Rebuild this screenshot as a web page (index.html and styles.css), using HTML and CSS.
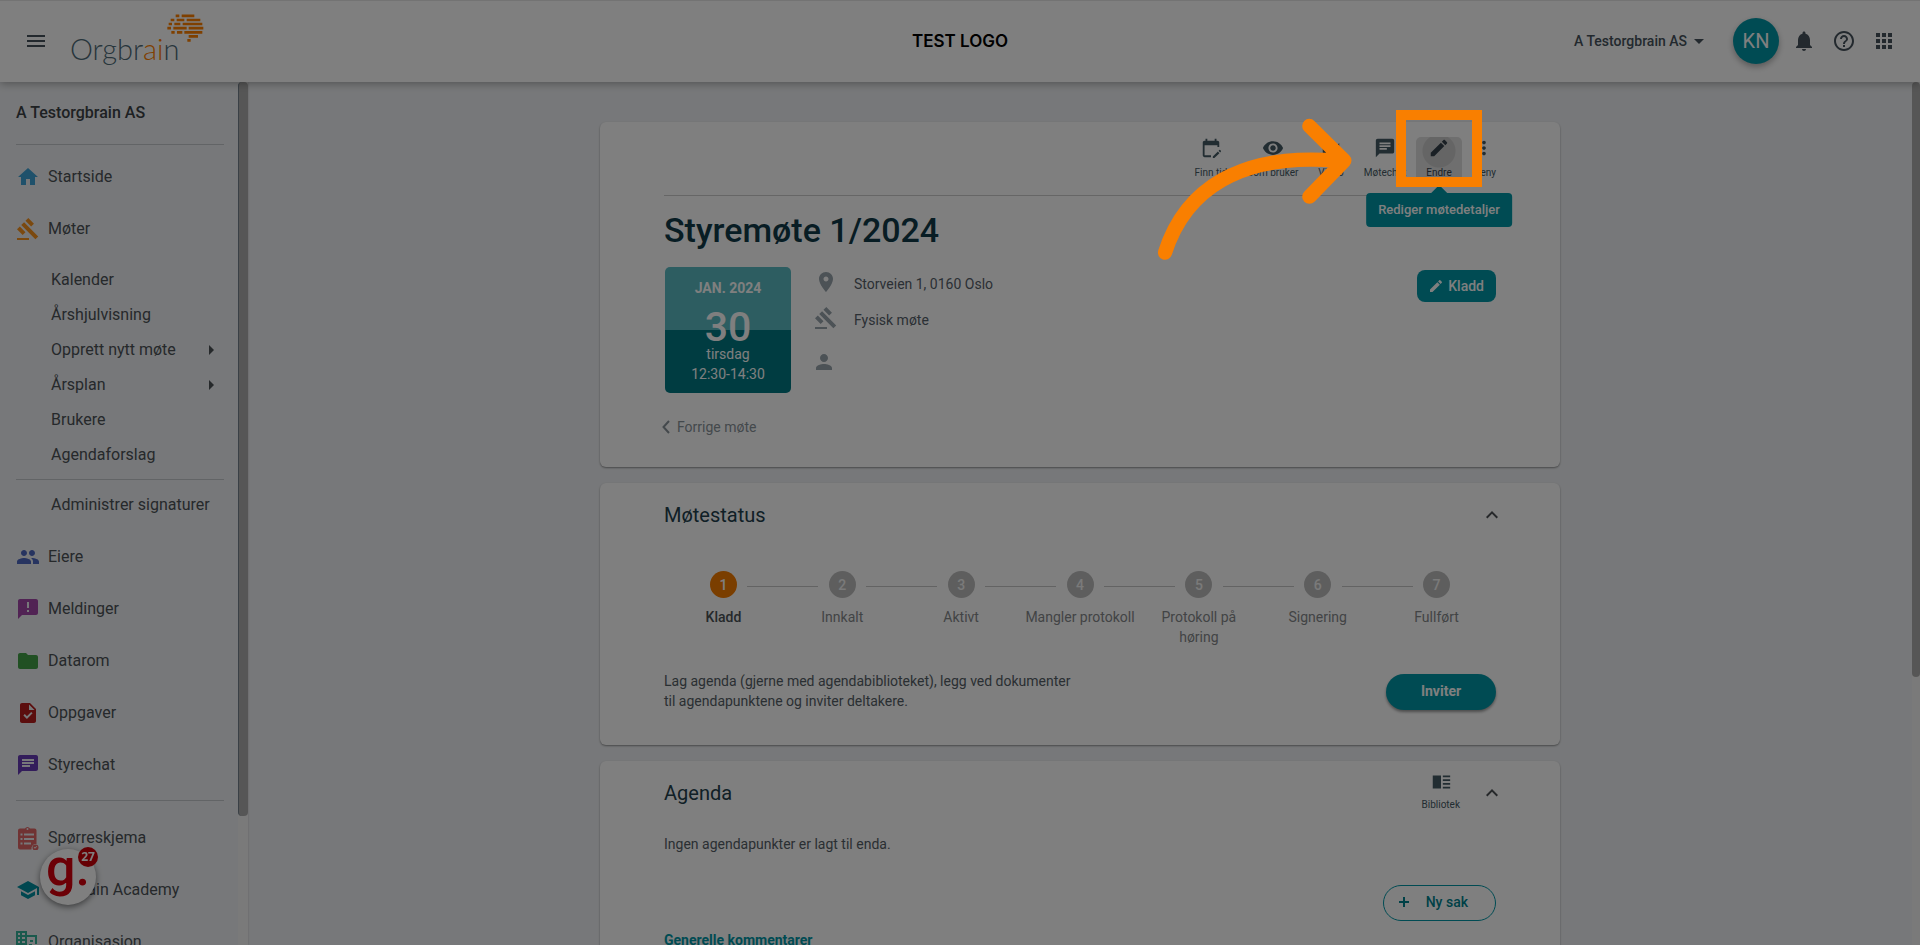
FILE: index.html
```html
<!DOCTYPE html>
<html lang="nb">
<head>
<meta charset="utf-8">
<title>Styremøte 1/2024</title>
<link rel="stylesheet" href="styles.css">
</head>
<body>
<div class="app">
  <header class="topbar">
    <button class="icon-btn" type="button" aria-label="Meny"><svg class="icon" viewBox="0 0 24 24"><path d="M3 18h18v-2H3v2zm0-5h18v-2H3v2zm0-7v2h18V6H3z"/></svg></button>
    <a class="brand" href="#">
      <span class="brand-name">Orgbr<span class="brand-accent">ai</span>n</span>
      <svg class="brand-mark" viewBox="500 43 111 84" aria-hidden="true"><g stroke="#ff8000" stroke-width="8"><path d="M526 48.500h11M544 48.500h38M511 61h11M529 61h23M559 61h41M505 73h10M522 73h18M547 73h59M501 85.500h11M519 85.500h40M565 85.500h44M513 98h10M530 98h16M552 98h54M565 110h28M561 122h10"/></g></svg>
    </a>
    <div class="client-logo">TEST LOGO</div>
    <div class="topbar-actions">
      <button class="org-switch" type="button">A Testorgbrain AS<svg class="icon" viewBox="0 0 24 24"><path d="M7 10l5 5 5-5z"/></svg></button>
      <button class="avatar" type="button">KN</button>
      <button class="icon-btn" type="button" aria-label="Varsler"><svg class="icon" viewBox="0 0 24 24"><path d="M12 22c1.100 0 2-.9 2-2h-4c0 1.100.89 2 2 2zm6-6v-5c0-3.070-1.640-5.640-4.500-6.320V4c0-.83-.67-1.500-1.500-1.500s-1.500.67-1.500 1.500v.68C7.630 5.360 6 7.920 6 11v5l-2 2v1h16v-1l-2-2z"/></svg></button>
      <button class="icon-btn" type="button" aria-label="Hjelp"><svg class="icon" viewBox="0 0 24 24"><path d="M11 18h2v-2h-2v2zm1-16C6.480 2 2 6.480 2 12s4.480 10 10 10 10-4.480 10-10S17.520 2 12 2zm0 18c-4.410 0-8-3.590-8-8s3.590-8 8-8 8 3.590 8 8-3.590 8-8 8zm0-14c-2.210 0-4 1.790-4 4h2c0-1.100.9-2 2-2s2 .9 2 2c0 2-3 1.750-3 5h2c0-2.250 3-2.500 3-5 0-2.210-1.790-4-4-4z"/></svg></button>
      <button class="icon-btn" type="button" aria-label="Apper"><svg class="icon" viewBox="0 0 24 24"><path d="M4 8h4V4H4v4zm6 12h4v-4h-4v4zm-6 0h4v-4H4v4zm0-6h4v-4H4v4zm6 0h4v-4h-4v4zm6-10v4h4V4h-4zm-6 4h4V4h-4v4zm6 6h4v-4h-4v4zm0 6h4v-4h-4v4z"/></svg></button>
    </div>
  </header>

  <div class="workspace">
    <aside class="sidebar">
      <nav class="nav">
        <div class="nav-title">A Testorgbrain AS</div>
        <hr class="rule rule-top">
        <a class="nav-item" href="#"><svg class="icon c-home" viewBox="0 0 24 24"><path d="M10 20v-6h4v6h5v-8h3L12 3 2 12h3v8z"/></svg>Startside</a>
        <a class="nav-item" href="#"><svg class="icon c-meet" viewBox="0 0 24 24"><path d="M1 21h12v2H1zM5.245 8.070l2.830-2.827 14.140 14.142-2.828 2.828zM12.317 1l5.657 5.656-2.830 2.830-5.654-5.660zM3.825 9.485l5.657 5.657-2.828 2.828-5.657-5.657z"/></svg>Møter</a>
        <div class="subnav">
          <a class="sub-item" href="#">Kalender</a>
          <a class="sub-item" href="#">Årshjulvisning</a>
          <a class="sub-item" href="#">Opprett nytt møte<svg class="icon" viewBox="0 0 24 24"><path d="M10 17l5-5-5-5v10z"/></svg></a>
          <a class="sub-item" href="#">Årsplan<svg class="icon" viewBox="0 0 24 24"><path d="M10 17l5-5-5-5v10z"/></svg></a>
          <a class="sub-item" href="#">Brukere</a>
          <a class="sub-item" href="#">Agendaforslag</a>
          <hr class="rule rule-sub">
          <a class="sub-item" href="#">Administrer signaturer</a>
        </div>
        <a class="nav-item" href="#"><svg class="icon c-own" viewBox="0 0 24 24"><path d="M16 11c1.660 0 2.990-1.340 2.990-3S17.660 5 16 5s-3 1.340-3 3 1.340 3 3 3zm-8 0c1.660 0 2.990-1.340 2.990-3S9.660 5 8 5 5 6.340 5 8s1.340 3 3 3zm0 2c-2.330 0-7 1.170-7 3.500V19h14v-2.500c0-2.330-4.670-3.500-7-3.500zm8 0c-.29 0-.62.020-.97.050 1.160.84 1.970 1.970 1.970 3.450V19h6v-2.500c0-2.330-4.670-3.500-7-3.500z"/></svg>Eiere</a>
        <a class="nav-item" href="#"><svg class="icon c-msg" viewBox="0 0 24 24"><path d="M20 2H4c-1.100 0-2 .9-2 2v18l4-4h14c1.100 0 2-.9 2-2V4c0-1.100-.9-2-2-2zm-7 13h-2v-2h2v2zm0-4h-2V5h2v6z"/></svg>Meldinger</a>
        <a class="nav-item" href="#"><svg class="icon c-data" viewBox="0 0 24 24"><path d="M10 4H4c-1.100 0-1.990.9-1.990 2L2 18c0 1.100.9 2 2 2h16c1.100 0 2-.9 2-2V8c0-1.100-.9-2-2-2h-8l-2-2z"/></svg>Datarom</a>
        <a class="nav-item" href="#"><svg class="icon c-task" viewBox="0 0 24 24"><path d="M14 2H6c-1.100 0-2 .9-2 2v16c0 1.100.9 2 2 2h12c1.100 0 2-.9 2-2V8l-6-6zm-3.060 16L7.400 14.460l1.410-1.410 2.120 2.120 4.240-4.240 1.410 1.410L10.940 18zM13 9V3.500L18.500 9H13z"/></svg>Oppgaver</a>
        <a class="nav-item" href="#"><svg class="icon c-chat" viewBox="0 0 24 24"><path d="M20 2H4c-1.100 0-2 .9-2 2v18l4-4h14c1.100 0 2-.9 2-2V4c0-1.100-.9-2-2-2zM6 6h12v2H6V6zm8 8H6v-2h8v2zm4-3H6V9h12v2z"/></svg>Styrechat</a>
        <hr class="rule rule-mid">
        <a class="nav-item" href="#"><svg class="icon c-form" viewBox="0 0 24 24"><path fill-rule="evenodd" d="M18.500 2.500H14a2.800 2.800 0 0 0-5 0H4A2 2 0 0 0 2 4.500v17a2 2 0 0 0 2 2h11.500a4.500 4.500 0 0 1 5-5.500V4.500a2 2 0 0 0-2-2zM11.500 2a1 1 0 1 1 0 2 1 1 0 0 1 0-2zM4.500 7.500h2v2h-2zm3.500 0h10v2H8zM4.500 12h2v2h-2zm3.500 0h10v2H8zm-3.500 4.500h2v2h-2zm3.500 0h7v2H8z"/><path fill-rule="evenodd" d="M19.500 18.500a3 3 0 1 1 0 6 3 3 0 0 1 0-6zm-.5 4.200 2.200-2.200-.6-.6-1.600 1.600-.8-.7-.5.600z"/></svg>Spørreskjema</a>
        <a class="nav-item" href="#"><svg class="icon c-acad" viewBox="0 0 24 24"><path d="M5 13.180v4L12 21l7-3.820v-4L12 17l-7-3.820zM12 3L1 9l11 6 9-4.910V17h2V9L12 3z"/></svg>Orgbrain Academy</a>
        <a class="nav-item" href="#"><svg class="icon c-org" viewBox="0 0 24 24"><path fill-rule="evenodd" d="M0 1h11v4h10v9h-2V7h-8v15H0zM2 3v2h2V3zm4 0v2h3V3zM2 7v2h2V7zm4 0v2h3V7zm-4 4v2h2v-2zm4 0v2h3v-2zm8-1h3v2h-3zm-1 4h3v3h-3z"/></svg>Organisasjon</a>
      </nav>
      <div class="scrollbar"><div class="thumb thumb-nav"></div></div>
    </aside>

    <main class="main">
      <div class="cards">
        <section class="card meeting">
          <div class="toolbar">
            <button class="tool" type="button"><svg viewBox="0 0 24 24"><path d="M19 4h-1V2h-2v2H8V2H6v2H5c-1.100 0-2 .9-2 2v14c0 1.100.9 2 2 2h7v-2H5V9h14v2h2V6c0-1.100-.9-2-2-2zM22.840 15.100l-.9-.9a.55.55 0 0 0-.8 0l-.9.900 1.700 1.700.9-.9a.55.55 0 0 0 0-.8zM19.500 15.900 14 21.300V23h1.700l5.500-5.400z"/></svg><span>Finn tid</span></button>
            <button class="tool" type="button"><svg viewBox="0 0 24 24"><path d="M12 4.500C7 4.500 2.730 7.610 1 12c1.730 4.390 6 7.500 11 7.500s9.270-3.110 11-7.500c-1.730-4.390-6-7.500-11-7.500zM12 17c-2.760 0-5-2.240-5-5s2.240-5 5-5 5 2.240 5 5-2.240 5-5 5zm0-8c-1.660 0-3 1.340-3 3s1.340 3 3 3 3-1.340 3-3-1.340-3-3-3z"/></svg><span>Som bruker</span></button>
            <button class="tool" type="button"><svg viewBox="0 0 24 24"><path d="M17 10.500V7c0-.55-.45-1-1-1H4c-.55 0-1 .45-1 1v10c0 .55.450 1 1 1h12c.55 0 1-.45 1-1v-3.500l4 4v-11l-4 4z"/></svg><span>Video</span></button>
            <button class="tool" type="button"><svg viewBox="0 0 24 24"><path d="M20 2H4c-1.100 0-2 .9-2 2v18l4-4h14c1.100 0 2-.9 2-2V4c0-1.100-.9-2-2-2zM6 6h12v2H6V6zm8 8H6v-2h8v2zm4-3H6V9h12v2z"/></svg><span>Møtechat</span></button>
            <div class="tool-wrap">
              <button class="tool tool-active" type="button"><svg viewBox="0 0 24 24"><path d="M3 17.250V21h3.750L17.810 9.940l-3.750-3.750L3 17.250zM20.710 7.040c.39-.39.390-1.020 0-1.410l-2.340-2.340c-.39-.39-1.020-.39-1.410 0l-1.830 1.830 3.750 3.750 1.830-1.830z"/></svg><span>Endre</span></button>
              <div class="tooltip" role="tooltip">Rediger møtedetaljer</div>
              <div class="highlight"></div>
              <svg class="pointer" viewBox="75 75 600 450" aria-hidden="true"><path d="M105 488C165 300 330 185 630 213M538 108 643 212 538 320"/></svg>
            </div>
            <button class="tool" type="button"><svg viewBox="0 0 24 24"><path d="M12 8c1.100 0 2-.9 2-2s-.9-2-2-2-2 .9-2 2 .9 2 2 2zm0 2c-1.100 0-2 .9-2 2s.9 2 2 2 2-.9 2-2-.9-2-2-2zm0 6c-1.100 0-2 .9-2 2s.9 2 2 2 2-.9 2-2-.9-2-2-2z"/></svg><span>Meny</span></button>
          </div>
          <h1 class="title">Styremøte 1/2024</h1>
          <div class="summary">
            <div class="date">
              <span class="date-month">JAN. 2024</span>
              <span class="date-day">30</span>
              <span class="date-text">tirsdag</span>
              <span class="date-text">12:30-14:30</span>
            </div>
            <div class="facts">
              <div class="fact"><svg class="icon" viewBox="0 0 24 24"><path d="M12 2C8.130 2 5 5.130 5 9c0 5.250 7 13 7 13s7-7.750 7-13c0-3.870-3.130-7-7-7zm0 9.500c-1.380 0-2.500-1.120-2.500-2.500s1.120-2.500 2.500-2.500 2.500 1.120 2.500 2.500-1.120 2.500-2.500 2.500z"/></svg><span>Storveien 1, 0160 Oslo</span></div>
              <div class="fact"><svg class="icon" viewBox="0 0 24 24"><path d="M1 21h12v2H1zM5.245 8.070l2.830-2.827 14.140 14.142-2.828 2.828zM12.317 1l5.657 5.656-2.830 2.830-5.654-5.660zM3.825 9.485l5.657 5.657-2.828 2.828-5.657-5.657z"/></svg><span>Fysisk møte</span></div>
              <div class="fact fact-person"><svg class="icon" viewBox="0 0 24 24"><path d="M12 12c2.210 0 4-1.790 4-4s-1.790-4-4-4-4 1.790-4 4 1.790 4 4 4zm0 2c-2.670 0-8 1.340-8 4v2h16v-2c0-2.660-5.330-4-8-4z"/></svg></div>
            </div>
            <button class="status-btn" type="button"><svg viewBox="0 0 24 24"><path d="M3 17.250V21h3.750L17.810 9.940l-3.750-3.750L3 17.250zM20.710 7.040c.39-.39.390-1.020 0-1.410l-2.340-2.340c-.39-.39-1.020-.39-1.410 0l-1.830 1.830 3.750 3.750 1.830-1.830z"/></svg>Kladd</button>
          </div>
          <a class="prev" href="#"><svg viewBox="0 0 8 14"><path d="M7 1 1.500 7 7 13"/></svg>Forrige møte</a>
        </section>

        <section class="card">
          <div class="card-head">
            <h2 class="heading">Møtestatus</h2>
            <button class="collapse" type="button" aria-label="Skjul møtestatus"><svg viewBox="6 8 12 8"><path d="M12 8l-6 6 1.410 1.410L12 10.830l4.590 4.580L18 14z"/></svg></button>
          </div>
          <ol class="steps">
            <li class="step step-on"><b>1</b><span>Kladd</span></li>
            <li class="step"><b>2</b><span>Innkalt</span></li>
            <li class="step"><b>3</b><span>Aktivt</span></li>
            <li class="step"><b>4</b><span>Mangler protokoll</span></li>
            <li class="step"><b>5</b><span>Protokoll på høring</span></li>
            <li class="step"><b>6</b><span>Signering</span></li>
            <li class="step"><b>7</b><span>Fullført</span></li>
          </ol>
          <div class="invite">
            <p class="text">Lag agenda (gjerne med agendabiblioteket), legg ved dokumenter til agendapunktene og inviter deltakere.</p>
            <button class="pill pill-solid" type="button">Inviter</button>
          </div>
        </section>

        <section class="card">
          <div class="card-head">
            <h2 class="heading">Agenda</h2>
            <button class="tool tool-library" type="button"><svg viewBox="0 0 24 24"><path d="M3 5h9v14H3zM14 5h8v1.800h-8zM14 9h8v2h-8zM14 13h8v2h-8zM14 17.200h8V19h-8z"/></svg><span>Bibliotek</span></button>
            <button class="collapse" type="button" aria-label="Skjul agenda"><svg viewBox="6 8 12 8"><path d="M12 8l-6 6 1.410 1.410L12 10.830l4.590 4.580L18 14z"/></svg></button>
          </div>
          <p class="text agenda-empty">Ingen agendapunkter er lagt til enda.</p>
          <div class="agenda-actions"><button class="pill pill-line" type="button"><svg viewBox="0 0 12 12"><path d="M1 6h10M6 1v10"/></svg>Ny sak</button></div>
          <a class="comments" href="#">Generelle kommentarer</a>
        </section>
      </div>
      <div class="scrollbar scrollbar-page"><div class="thumb thumb-page"></div></div>
    </main>
  </div>

  <button class="guide" type="button" aria-label="Guider"><span class="guide-mark">g.</span><span class="guide-count">27</span></button>
  <div class="dim"></div>
</div>
</body>
</html>
```
FILE: styles.css
```css
* { box-sizing: border-box; }

body {
  margin: 0;
  font: 14px/20px Roboto, "Open Sans", sans-serif;
  color: #555e66;
  background: #eff1f4;
}

button {
  font: inherit;
  color: inherit;
  border: 0;
  padding: 0;
  background: none;
  cursor: pointer;
}

a { color: inherit; text-decoration: none; }
svg { display: block; flex: none; fill: currentColor; }
.icon { width: 24px; height: 24px; }

.app {
  height: 100vh;
  display: flex;
  flex-direction: column;
  overflow: hidden;
}

/* Top bar */
.topbar {
  position: relative;
  z-index: 2;
  flex: none;
  height: 82px;
  padding: 0 24px 2px;
  display: grid;
  grid-template-columns: auto 1fr auto 1fr;
  align-items: center;
  background: #fff;
  border-top: 1px solid #e6e6e6;
  box-shadow: 0 2px 8px rgba(0, 0, 0, 0.3);
  color: #46525c;
}

.brand { display: flex; align-items: flex-start; margin-left: 22px; }
.brand-name { font: 300 29px/40px Lato, sans-serif; color: #4e6b78; margin-top: 16px; }
.brand-accent { color: #ff8000; }
.brand-mark { width: 37px; height: 28px; margin: 1px 0 0 -13px; }
.client-logo { margin-left: -24px; font: 600 17px/20px Inter, sans-serif; color: #000; }

.topbar-actions { display: flex; align-items: center; justify-content: flex-end; gap: 16px; }
.org-switch { display: flex; align-items: center; font-weight: 500; margin-right: 6px; }
.avatar {
  width: 46px;
  height: 46px;
  margin-right: -3px;
  border-radius: 50%;
  background: #0097a7;
  color: #fff;
  font-size: 20px;
  box-shadow: 0 3px 6px rgba(0, 0, 0, 0.3);
}

/* Sidebar */
.workspace { flex: 1; display: flex; min-height: 0; }
.sidebar { flex: none; width: 248px; display: flex; overflow: hidden; box-shadow: 0 0 2px rgba(0, 0, 0, 0.2); }
.nav { flex: 1; padding: 0 14px 0 16px; font-size: 16px; color: #4c5257; }
.nav-title { padding: 21px 0; font-weight: 500; color: #3c4246; }
.rule { border: 0; height: 1px; background: #c4c8cc; }
.rule-top { margin: 0 0 6px; }
.rule-sub { margin: 7px 0 7px -35px; }
.rule-mid { margin: 9px 0 11px; }
.nav-item { display: flex; align-items: center; gap: 8px; height: 52px; }
.subnav { padding: 7px 0 9px 35px; }
.sub-item { display: flex; align-items: center; justify-content: space-between; height: 35px; padding-right: 1px; }
.c-home { color: #3fa2d6; }
.c-meet { color: #f6921e; }
.c-own { color: #4f69c0; }
.c-msg { color: #a246a8; }
.c-data { color: #43a047; }
.c-task { color: #b71c1c; }
.c-chat { color: #673ab7; }
.c-form { color: #e06666; }
.c-acad { color: #008fa0; }
.c-org { color: #35b39b; }

.scrollbar { flex: none; width: 10px; background: #f4f4f4; }
.scrollbar-page { width: 8px; }
.thumb { background: #adadad; border-radius: 4px; }
.thumb-nav { height: 85%; border-left: 1px solid #74818c; }
.thumb-page { height: 69%; }

/* Main column */
.main { flex: 1; display: flex; min-width: 0; }
.cards {
  flex: 1;
  max-width: 960px;
  margin: 0 auto;
  padding-top: 40px;
  display: flex;
  flex-direction: column;
  gap: 16px;
}
.card {
  flex: none;
  padding: 0 64px 34px;
  background: #fff;
  border-radius: 6px;
  box-shadow: 0 1px 2px rgba(0, 0, 0, 0.4);
}
.meeting { padding-bottom: 30px; }

.toolbar {
  display: flex;
  justify-content: flex-end;
  padding: 15px 0 12px;
  border-bottom: 1px solid #ccc;
}
.tool {
  display: flex;
  flex-direction: column;
  align-items: center;
  gap: 7px;
  height: 46px;
  padding: 0 10px;
  font-size: 10px;
  line-height: 14px;
  color: #455a64;
}
.tool svg { width: 22px; height: 22px; }
.toolbar > .tool:last-child { padding-right: 0; }
.tool-wrap { position: relative; }
.tool-active {
  border-radius: 5px;
  color: #34404a;
  background: radial-gradient(circle 17px at 50% 14px, #cacaca 16px, #dedede 17px);
}
.tooltip {
  position: absolute;
  top: 56px;
  left: 50%;
  transform: translateX(-50%);
  padding: 7px 12px;
  border-radius: 4px;
  background: #0097a7;
  color: #fff;
  font-size: 13px;
  font-weight: 500;
  white-space: nowrap;
}
.tooltip::before {
  content: "";
  position: absolute;
  top: -8px;
  left: 50%;
  margin-left: -10px;
  border: 10px solid transparent;
  border-top: 0;
  border-bottom-color: #0097a7;
}
.highlight {
  position: absolute;
  z-index: 20;
  top: -27px;
  left: 50%;
  width: 86px;
  height: 77px;
  margin-left: -43px;
  border: 10px solid #f97f00;
}
.pointer {
  position: absolute;
  z-index: 20;
  top: -22px;
  right: 107px;
  width: 200px;
  height: 150px;
  fill: none;
  stroke: #f97f00;
  stroke-width: 43;
  stroke-linecap: round;
  stroke-linejoin: round;
}

.title { margin: 14px 0 17px; font-size: 34px; line-height: 40px; font-weight: 500; color: #103a48; }

.summary { display: flex; align-items: flex-start; }
.date {
  width: 126px;
  height: 126px;
  margin-left: 1px;
  padding-top: 11px;
  border-radius: 5px;
  background: linear-gradient(#5abac2 50%, #007883 50%);
  color: #fff;
  display: flex;
  flex-direction: column;
  align-items: center;
}
.date-month { font-weight: 700; }
.date-day { font-size: 41px; font-weight: 500; line-height: 46px; margin-top: 6px; height: 40px; }
.facts { flex: 1; margin-left: 23px; }
.fact { display: flex; align-items: center; gap: 16px; height: 36px; color: #56606a; }
.fact .icon { color: #98a4ac; margin-bottom: 6px; }
.fact span { margin-bottom: 2px; }
.fact-person { margin: 8px 0 0 -2px; }
.status-btn {
  display: flex;
  align-items: center;
  gap: 4px;
  height: 32px;
  margin-top: 3px;
  padding: 0 12px 1px 11px;
  border-radius: 8px;
  background: #0097a7;
  color: #fff;
  font-weight: 500;
}
.status-btn svg { width: 16px; height: 16px; }
.prev { display: flex; align-items: center; gap: 7px; margin: 24px 0 0 -2px; color: #889299; }
.prev svg { width: 8px; height: 14px; fill: none; stroke: currentColor; stroke-width: 2; }

.card-head { display: flex; align-items: center; height: 64px; }
.heading { flex: 1; margin: 0; font-size: 20px; line-height: 24px; font-weight: 400; color: #22404c; }
.collapse { margin-right: -2px; }
.collapse svg { width: 12px; height: 8px; fill: #4c5054; }
.tool-library { padding: 0; gap: 5px; height: 44px; margin-right: 26px; }

.steps { display: flex; list-style: none; margin: 24px 0; padding: 0; }
.step {
  position: relative;
  flex: 1;
  padding: 0 2px;
  display: flex;
  flex-direction: column;
  align-items: center;
  gap: 9px;
  text-align: center;
  color: #85888b;
}
.step b {
  width: 27px;
  height: 27px;
  border-radius: 50%;
  background: #bdbdbd;
  color: #f4f4f4;
  line-height: 28px;
  font-weight: 500;
}
.step + .step::before {
  content: "";
  position: absolute;
  top: 15px;
  right: calc(50% + 24px);
  left: calc(-50% + 24px);
  height: 1px;
  background: #c6c6c6;
}
.step-on { color: #4c5257; font-weight: 500; }
.step-on b { background: #f57c00; color: #fff; }

.text { margin: 0; }
.invite { display: flex; align-items: flex-start; justify-content: space-between; }
.invite .text { width: 50%; }
.pill {
  display: flex;
  align-items: center;
  justify-content: center;
  height: 36px;
  padding-bottom: 2px;
  border-radius: 18px;
  font-weight: 500;
}
.pill-solid {
  min-width: 110px;
  margin-top: 3px;
  background: #0097a7;
  color: #fff;
  font-weight: 700;
  box-shadow: 0 2px 3px rgba(0, 0, 0, 0.4);
}
.pill-line { gap: 16px; padding: 0 27px 2px 14px; border: 1px solid #0097a7; color: #00838f; }
.pill-line svg { width: 12px; height: 12px; stroke: currentColor; stroke-width: 2; }

.agenda-empty { margin-top: 9px; }
.agenda-actions { display: flex; justify-content: flex-end; margin: 31px 0 9px; }
.comments { font-weight: 700; color: #0097a7; }

/* Guide launcher and page dimming */
.guide {
  position: fixed;
  left: 40px;
  bottom: 40px;
  width: 56px;
  height: 56px;
  border-radius: 50%;
  background: #fff;
  box-shadow: 0 2px 6px rgba(0, 0, 0, 0.5);
}
.guide-mark { display: block; height: 56px; font-size: 52px; line-height: 38px; font-weight: 500; color: #d8000c; }
.guide-count {
  position: absolute;
  top: -2px;
  right: -2px;
  width: 20px;
  height: 20px;
  border-radius: 50%;
  background: #cc0008;
  color: #fff;
  font: 700 12px/20px "Open Sans", sans-serif;
}
.dim { position: fixed; inset: 0; z-index: 10; background: rgba(0, 0, 0, 0.5); pointer-events: none; }
```
